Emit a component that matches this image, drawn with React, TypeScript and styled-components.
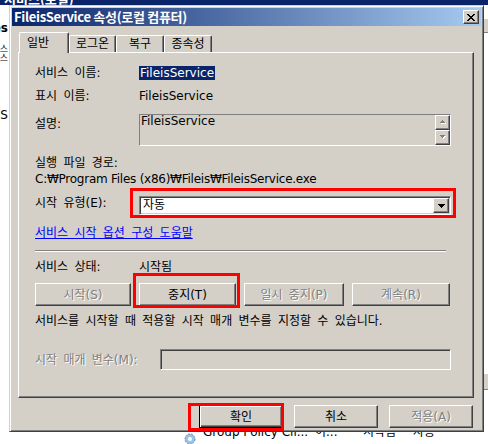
import React from "react";
import styled, { createGlobalStyle, css } from "styled-components";

const FACE = "#D4D0C8";
const SHADOW = "#808080";
const DARK = "#404040";
const LIGHT = "#FFFFFF";
const NAVY = "#0A246A";
const UI_FONT = `"DejaVu Sans", "Noto Sans CJK KR", sans-serif`;
const TITLE_FONT = `"Noto Sans CJK KR", "DejaVu Sans", sans-serif`;

const GlobalStyle = createGlobalStyle`
  html, body { margin: 0; padding: 0; background: #ffffff; }
  body {
    width: 488px; height: 444px; overflow: hidden;
    font-family: ${UI_FONT}; font-size: 12px; color: #000;
  }
  #root { width: 488px; height: 444px; }
`;

const raised = css`
  border: 1px solid;
  border-color: ${LIGHT} ${DARK} ${DARK} ${LIGHT};
  box-shadow: inset -1px -1px ${SHADOW};
  background: ${FACE};
`;

const sunken = css`
  border: 1px solid;
  border-color: ${SHADOW} ${LIGHT} ${LIGHT} ${SHADOW};
  box-shadow: inset 1px 1px ${DARK}, inset -1px -1px ${FACE};
`;

/* ---------- desktop / window underneath ---------- */

const Desktop = styled.div`
  position: relative;
  width: 488px;
  height: 444px;
  overflow: hidden;
  background: #fff;
`;

const BackWindow = styled.div`
  display: flex;
  flex-direction: column;
  width: 100%;
  height: 100%;
`;

const BackHeader = styled.div`
  flex: none;
  height: 5px;
  overflow: hidden;
  background: ${NAVY};
`;

const BackHeaderText = styled.div`
  margin-top: -8px;
  padding-left: 4px;
  color: #fff;
  font-family: ${TITLE_FONT};
  font-weight: bold;
  font-size: 13px;
  line-height: 13px;
  white-space: nowrap;
`;

const BackBody = styled.div`
  flex: 1;
  display: flex;
  min-height: 0;
`;

const BackSide = styled.div`
  width: 8px;
  overflow: hidden;
  display: flex;
  flex-direction: column;
  align-items: flex-end;
`;

const BackFrag = styled.div<{ $mt: number; $bold?: boolean; $size?: number; $lh?: number }>`
  margin-top: ${(p) => p.$mt}px;
  white-space: nowrap;
  font-size: ${(p) => p.$size ?? 12}px;
  line-height: ${(p) => p.$lh ?? 14}px;
  font-weight: ${(p) => (p.$bold ? "bold" : "normal")};
`;

const BackGap = styled.div`
  flex: 1;
`;

const BackRight = styled.div`
  width: 4px;
  display: flex;
  flex-direction: column;
`;

const BackRightBlock = styled.div<{ $mt: number; $h: number }>`
  margin-top: ${(p) => p.$mt}px;
  height: ${(p) => p.$h}px;
  background: ${FACE};
  border-top: 1px solid ${LIGHT};
  border-bottom: 1px solid ${SHADOW};
`;

const BackFooter = styled.div`
  flex: none;
  height: 16px;
  display: flex;
  align-items: flex-start;
  padding-left: 183px;
  overflow: hidden;
`;

const BackIcon = styled.svg`
  flex: none;
  margin-top: 4px;
  margin-right: 6px;
`;

const BackCell = styled.span<{ $w?: number }>`
  flex: none;
  width: ${(p) => (p.$w ? `${p.$w}px` : "auto")};
  margin-top: -3px;
  font-size: 12px;
  line-height: 14px;
  white-space: nowrap;
  overflow: hidden;
`;

/* ---------- dialog ---------- */

const Dialog = styled.div`
  position: absolute;
  left: 9px;
  top: 5px;
  width: 475px;
  height: 427px;
  box-sizing: border-box;
  padding: 2px;
  background: ${FACE};
  border: 1px solid;
  border-color: ${FACE} ${DARK} ${DARK} ${FACE};
  box-shadow: inset 1px 1px ${LIGHT}, inset -1px -1px ${SHADOW};
  display: flex;
  flex-direction: column;
  word-spacing: 2.5px;
`;

const TitleBar = styled.div`
  flex: none;
  height: 18px;
  display: flex;
  align-items: center;
  justify-content: space-between;
  padding: 0 2px;
  background: linear-gradient(to right, ${NAVY}, #a6caf0);
`;

const TitleText = styled.span`
  color: #fff;
  font-family: ${TITLE_FONT};
  font-weight: bold;
  font-size: 13px;
  line-height: 18px;
  word-spacing: 0;
  letter-spacing: -0.3px;
  white-space: nowrap;
`;

const CloseBox = styled.div`
  box-sizing: border-box;
  width: 16px;
  height: 14px;
  ${raised};
  display: flex;
  align-items: center;
  justify-content: center;
`;

const Body = styled.div`
  flex: 1;
  display: flex;
  flex-direction: column;
  padding: 6px 7px 0 6px;
`;

const TabRow = styled.div`
  height: 20px;
  display: flex;
  align-items: flex-end;
  padding-left: 1px;
`;

const Tab = styled.div<{ $active?: boolean; $w: number }>`
  position: relative;
  z-index: ${(p) => (p.$active ? 1 : 0)};
  box-sizing: border-box;
  width: ${(p) => p.$w}px;
  height: ${(p) => (p.$active ? 21 : 17)}px;
  margin-bottom: ${(p) => (p.$active ? -1 : 0)}px;
  border-top: 1px solid ${LIGHT};
  border-left: 1px solid ${LIGHT};
  border-right: 1px solid ${DARK};
  border-radius: 2px 2px 0 0;
  box-shadow: inset -1px 0 ${SHADOW};
  background: ${FACE};
  display: flex;
  align-items: center;
  justify-content: ${(p) => (p.$active ? "flex-start" : "center")};
  padding-left: ${(p) => (p.$active ? 7 : 0)}px;
  padding-bottom: ${(p) => (p.$active ? 1 : 0)}px;
  font-size: 12px;
  line-height: 14px;
`;

const Panel = styled.div`
  box-sizing: border-box;
  height: 346px;
  border: 1px solid;
  border-color: ${LIGHT} ${DARK} ${DARK} ${LIGHT};
  box-shadow: inset -1px -1px ${SHADOW};
  padding-left: 16px;
  display: flex;
  flex-direction: column;
`;

const FieldRow = styled.div<{ $mt: number; $labelW?: number }>`
  display: grid;
  grid-template-columns: ${(p) => p.$labelW ?? 104}px 1fr;
  align-items: start;
  justify-items: start;
  margin-top: ${(p) => p.$mt}px;
  font-size: 12px;
  line-height: 14px;
`;

const Label = styled.span<{ $pt?: number; $disabled?: boolean }>`
  padding-top: ${(p) => p.$pt ?? 0}px;
  white-space: nowrap;
  color: ${(p) => (p.$disabled ? SHADOW : "#000")};
  text-shadow: ${(p) => (p.$disabled ? `1px 1px ${LIGHT}` : "none")};
`;

const Value = styled.span`
  white-space: nowrap;
`;

const Selected = styled.span`
  display: inline-block;
  padding: 0 1px;
  background: ${NAVY};
  color: #fff;
  white-space: nowrap;
`;

const DescBox = styled.div`
  box-sizing: border-box;
  width: 312px;
  height: 32px;
  border: 1px solid;
  border-color: ${SHADOW} ${LIGHT} ${LIGHT} ${SHADOW};
  display: flex;
  justify-content: space-between;
`;

const DescText = styled.span`
  padding-left: 1px;
  margin-top: -1px;
  white-space: nowrap;
`;

const ScrollCol = styled.div`
  display: flex;
  flex-direction: column;
`;

const ScrollBtn = styled.div`
  box-sizing: border-box;
  width: 15px;
  height: 15px;
  ${raised};
  display: flex;
  align-items: center;
  justify-content: center;
`;

const TextLine = styled.div<{ $mt: number; $tight?: boolean }>`
  align-self: flex-start;
  margin-top: ${(p) => p.$mt}px;
  font-size: 12px;
  line-height: 14px;
  white-space: nowrap;
  ${(p) =>
    p.$tight &&
    css`
      word-spacing: 0;
      letter-spacing: -0.25px;
    `}
`;

const LinkLine = styled.span<{ $mt: number }>`
  align-self: flex-start;
  margin-top: ${(p) => p.$mt}px;
  font-size: 12px;
  line-height: 14px;
  color: #0000ff;
  text-decoration: underline;
  white-space: nowrap;
`;

const Combo = styled.div`
  position: relative;
  box-sizing: border-box;
  width: 312px;
  height: 19px;
  ${sunken};
  background: #fff;
  padding: 1px;
  display: flex;
  align-items: stretch;
`;

const ComboText = styled.span`
  flex: 1;
  padding-left: 2px;
  font-size: 12px;
  line-height: 15px;
`;

const DropBtn = styled.div`
  box-sizing: border-box;
  width: 16px;
  ${raised};
  display: flex;
  align-items: center;
  justify-content: center;
`;

const Separator = styled.div`
  margin-top: 10px;
  width: 411px;
  border-top: 1px solid ${SHADOW};
  border-bottom: 1px solid ${LIGHT};
`;

const ServiceButtons = styled.div`
  margin-top: 9px;
  display: grid;
  grid-template-columns: 96px 97px 100px 98px;
  column-gap: 8px;
`;

const MarkWrap = styled.div`
  position: relative;
  display: flex;
`;

const PushButton = styled.button<{ $disabled?: boolean; $default?: boolean; $w?: number }>`
  box-sizing: border-box;
  width: ${(p) => (p.$w ? `${p.$w}px` : "100%")};
  height: 23px;
  margin: 0;
  padding: 0;
  font-family: ${UI_FONT};
  font-size: 12px;
  line-height: 14px;
  word-spacing: 2.5px;
  cursor: default;
  display: flex;
  align-items: center;
  justify-content: center;
  ${raised};
  color: ${(p) => (p.$disabled ? SHADOW : "#000")};
  text-shadow: ${(p) => (p.$disabled ? `1px 1px ${LIGHT}` : "none")};
  ${(p) =>
    p.$default &&
    css`
      border-color: #000;
      box-shadow: inset 1px 1px ${LIGHT}, inset -1px -1px ${DARK}, inset -2px -2px ${SHADOW};
    `}
`;

const ParamInput = styled.div`
  box-sizing: border-box;
  width: 291px;
  height: 21px;
  ${sunken};
  background: ${FACE};
`;

const DialogButtons = styled.div`
  margin-top: 7px;
  margin-right: 1px;
  display: flex;
  justify-content: flex-end;
  gap: 11px;
`;

const RedMark = styled.div<{ $t: number; $l: number; $r: number; $b: number }>`
  position: absolute;
  top: -${(p) => p.$t}px;
  left: -${(p) => p.$l}px;
  right: -${(p) => p.$r}px;
  bottom: -${(p) => p.$b}px;
  border: 3px solid #ff0000;
  pointer-events: none;
`;

/* ---------- glyph drawings ---------- */

const CloseGlyph = () => (
  <svg width="8" height="7" viewBox="0 0 8 7" shapeRendering="crispEdges">
    <path
      fill="#000"
      d="M0 0h2v1H0z M6 0h2v1H6z M1 1h2v1H1z M5 1h2v1H5z M2 2h4v1H2z M3 3h2v1H3z M2 4h4v1H2z M1 5h2v1H1z M5 5h2v1H5z M0 6h2v1H0z M6 6h2v1H6z"
    />
  </svg>
);

const DropGlyph = () => (
  <svg width="7" height="4" viewBox="0 0 7 4" shapeRendering="crispEdges">
    <path fill="#000" d="M0 0h7v1H0z M1 1h5v1H1z M2 2h3v1H2z M3 3h1v1H3z" />
  </svg>
);

const DisabledArrow = ({ up }: { up?: boolean }) => (
  <svg width="6" height="5" viewBox="0 0 6 5" shapeRendering="crispEdges">
    {up ? (
      <>
        <path fill={LIGHT} d="M3 1h1v1H3z M2 2h3v1H2z M1 3h5v1H1z" />
        <path fill={SHADOW} d="M2 0h1v1H2z M1 1h3v1H1z M0 2h5v1H0z" />
      </>
    ) : (
      <>
        <path fill={LIGHT} d="M1 1h5v1H1z M2 2h3v1H2z M3 3h1v1H3z" />
        <path fill={SHADOW} d="M0 0h5v1H0z M1 1h3v1H1z M2 2h1v1H2z" />
      </>
    )}
  </svg>
);

const GearIcon = () => (
  <BackIcon width="14" height="14" viewBox="0 0 14 14">
    <circle cx="7" cy="7" r="5" fill="#9cc3e6" stroke="#6f8fb3" strokeWidth="1" strokeDasharray="2 1" />
    <circle cx="7" cy="7" r="2" fill="#fff" />
  </BackIcon>
);

export default function App() {
  return (
    <>
      <GlobalStyle />
      <Desktop>
        <BackWindow>
          <BackHeader>
            <BackHeaderText>서비스(로컬)</BackHeaderText>
          </BackHeader>
          <BackBody>
            <BackSide>
              <BackFrag $mt={16} $bold>
                Services
              </BackFrag>
              <BackFrag $mt={10} $size={9} $lh={9}>
                서비스
              </BackFrag>
              <BackFrag $mt={0} $size={9} $lh={9}>
                프로세스
              </BackFrag>
              <BackFrag $mt={45}>서비스 :S</BackFrag>
            </BackSide>
            <BackGap />
            <BackRight>
              <BackRightBlock $mt={13} $h={13} />
              <BackRightBlock $mt={340} $h={15} />
            </BackRight>
          </BackBody>
          <BackFooter>
            <GearIcon />
            <BackCell $w={112}>Group Policy Cli...</BackCell>
            <BackCell $w={48}>이...</BackCell>
            <BackCell $w={50}>시작됨</BackCell>
            <BackCell>자동</BackCell>
          </BackFooter>
        </BackWindow>

        <Dialog>
          <TitleBar>
            <TitleText>FileisService 속성(로컬 컴퓨터)</TitleText>
            <CloseBox>
              <CloseGlyph />
            </CloseBox>
          </TitleBar>
          <Body>
            <TabRow>
              <Tab $active $w={50}>
                일반
              </Tab>
              <Tab $w={47}>로그온</Tab>
              <Tab $w={48}>복구</Tab>
              <Tab $w={48}>종속성</Tab>
            </TabRow>
            <Panel>
              <FieldRow $mt={13}>
                <Label>서비스 이름:</Label>
                <Selected>FileisService</Selected>
              </FieldRow>
              <FieldRow $mt={9}>
                <Label>표시 이름:</Label>
                <Value>FileisService</Value>
              </FieldRow>
              <FieldRow $mt={11}>
                <Label $pt={3}>설명:</Label>
                <DescBox>
                  <DescText>FileisService</DescText>
                  <ScrollCol>
                    <ScrollBtn>
                      <DisabledArrow up />
                    </ScrollBtn>
                    <ScrollBtn>
                      <DisabledArrow />
                    </ScrollBtn>
                  </ScrollCol>
                </DescBox>
              </FieldRow>
              <TextLine $mt={10}>실행 파일 경로:</TextLine>
              <TextLine $mt={2} $tight>
                C:₩Program Files (x86)₩Fileis₩FileisService.exe
              </TextLine>
              <FieldRow $mt={10}>
                <Label>시작 유형(E):</Label>
                <Combo>
                  <ComboText>자동</ComboText>
                  <DropBtn>
                    <DropGlyph />
                  </DropBtn>
                  <RedMark $t={9} $l={10} $r={6} $b={4} />
                </Combo>
              </FieldRow>
              <LinkLine $mt={11}>서비스 시작 옵션 구성 도움말</LinkLine>
              <Separator />
              <FieldRow $mt={8}>
                <Label>서비스 상태:</Label>
                <Value>시작됨</Value>
              </FieldRow>
              <ServiceButtons>
                <PushButton $disabled>시작(S)</PushButton>
                <MarkWrap>
                  <PushButton>중지(T)</PushButton>
                  <RedMark $t={10} $l={6} $r={4} $b={2} />
                </MarkWrap>
                <PushButton $disabled>일시 중지(P)</PushButton>
                <PushButton $disabled>계속(R)</PushButton>
              </ServiceButtons>
              <TextLine $mt={8}>서비스를 시작할 때 적용할 시작 매개 변수를 지정할 수 있습니다.</TextLine>
              <FieldRow $mt={21} $labelW={125}>
                <Label $pt={4} $disabled>
                  시작 매개 변수(M):
                </Label>
                <ParamInput />
              </FieldRow>
            </Panel>
            <DialogButtons>
              <MarkWrap>
                <PushButton $default $w={84}>
                  확인
                </PushButton>
                <RedMark $t={2} $l={11} $r={1} $b={3} />
              </MarkWrap>
              <PushButton $w={84}>취소</PushButton>
              <PushButton $disabled $w={84}>
                적용(A)
              </PushButton>
            </DialogButtons>
          </Body>
        </Dialog>
      </Desktop>
    </>
  );
}
